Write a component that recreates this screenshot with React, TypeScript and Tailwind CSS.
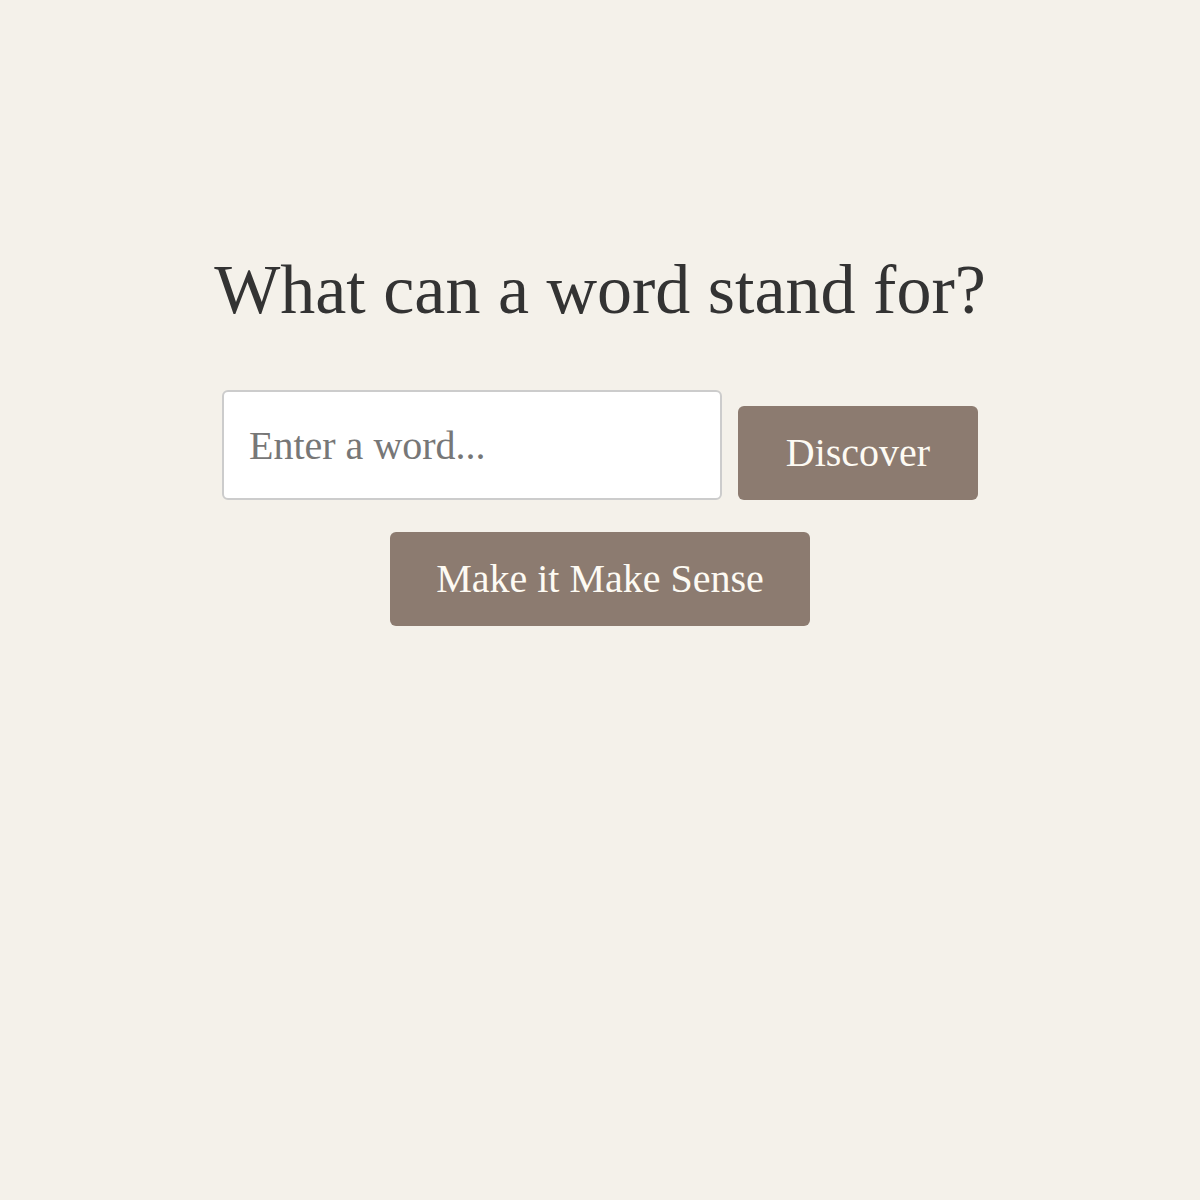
export default function App() {
  return (
    <div className="min-h-screen bg-[#f4f1ea] font-['Liberation_Serif',serif] text-[#333]">
      <main className="flex flex-col items-center pt-[252px]">
        <h1 className="text-[70px] leading-[76px] font-normal text-[#333]">What can a word stand for?</h1>

        <div className="mt-[62px] flex items-end gap-[16px]">
          <input
            type="text"
            placeholder="Enter a word..."
            className="w-[500px] h-[110px] rounded-md border-2 border-[#cccccc] bg-white px-[25px] text-[40px] text-[#333] placeholder:text-[#777] outline-none"
          />
          <button className="w-[240px] h-[94px] rounded-md bg-[#8c7b70] text-[40px] text-[#fdfaf3]">
            Discover
          </button>
        </div>

        <button className="mt-[32px] w-[420px] h-[94px] rounded-md bg-[#8c7b70] text-[40px] text-[#fdfaf3]">
          Make it Make Sense
        </button>
      </main>
    </div>
  );
}
